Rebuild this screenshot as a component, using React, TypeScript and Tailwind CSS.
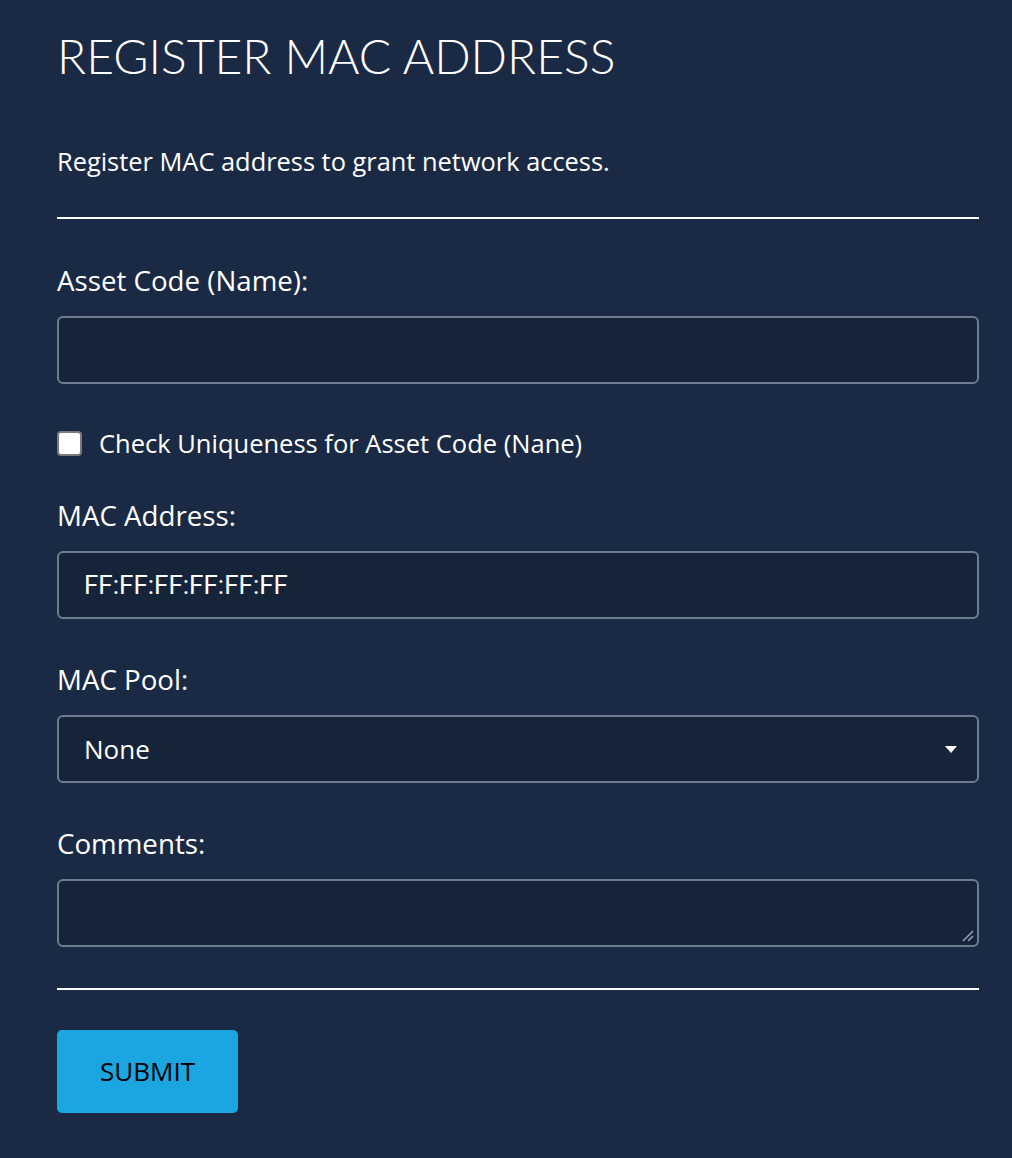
import React from "react";

export default function App() {
  const label = "text-[27.7px] leading-[32px] text-white";
  const box =
    "w-full h-[68px] rounded-[6px] border-2 border-[#6e7c90] bg-[#16243a] px-[25px] text-[26px] text-white outline-none";
  return (
    <div
      className="w-[1012px] h-[1158px] bg-[#1b2a44] overflow-hidden"
      style={{ fontFamily: '"Open Sans", sans-serif' }}
    >
      <div className="px-[57px] pr-[33px] pt-[26px]">
        <h1
          className="text-[48px] leading-[60px] text-white font-light"
          style={{ fontFamily: 'Lato, sans-serif' }}
        >
          REGISTER MAC ADDRESS
        </h1>
        <p className="mt-[59px] text-[25.4px] leading-[32px] text-white">
          Register MAC address to grant network access.
        </p>
        <div className="mt-[40px] h-[2px] bg-white" />
        <div className={`mt-[45px] ${label}`}>Asset Code (Name):</div>
        <input className={`mt-[20px] ${box}`} />
        <div className="mt-[43px] flex items-center gap-[17px]">
          <div className="w-[25px] h-[25px] rounded-[4px] bg-white border-2 border-[#7a7a7a]" />
          <span className="text-[25.5px] leading-[32px] text-white">
            Check Uniqueness for Asset Code (Nane)
          </span>
        </div>
        <div className={`mt-[40px] ${label}`}>MAC Address:</div>
        <div
          className={`mt-[20px] ${box} flex items-center`}
          style={{ fontFamily: "Roboto, sans-serif" }}
        >
          FF:FF:FF:FF:FF:FF
        </div>
        <div className={`mt-[44px] ${label}`}>MAC Pool:</div>
        <div className={`mt-[20px] ${box} flex items-center justify-between pr-[20px]`}>
          <span>None</span>
          <svg width="12" height="7" viewBox="0 0 12 7">
            <path d="M0 0 L12 0 L6 7 Z" fill="white" />
          </svg>
        </div>
        <div className={`mt-[44px] ${label}`}>Comments:</div>
        <div className={`mt-[20px] ${box} relative`}>
          <svg
            className="absolute right-[3px] bottom-[3px]"
            width="12"
            height="12"
            viewBox="0 0 12 12"
          >
            <path d="M1 11 L11 1 M6 11 L11 6" stroke="#9aa3ae" strokeWidth="1.5" />
          </svg>
        </div>
        <div className="mt-[41px] h-[2px] bg-white" />
        <button className="mt-[40px] w-[181px] h-[83px] rounded-[5px] bg-[#1ba5e1] text-[26px] text-black">
          SUBMIT
        </button>
      </div>
    </div>
  );
}
